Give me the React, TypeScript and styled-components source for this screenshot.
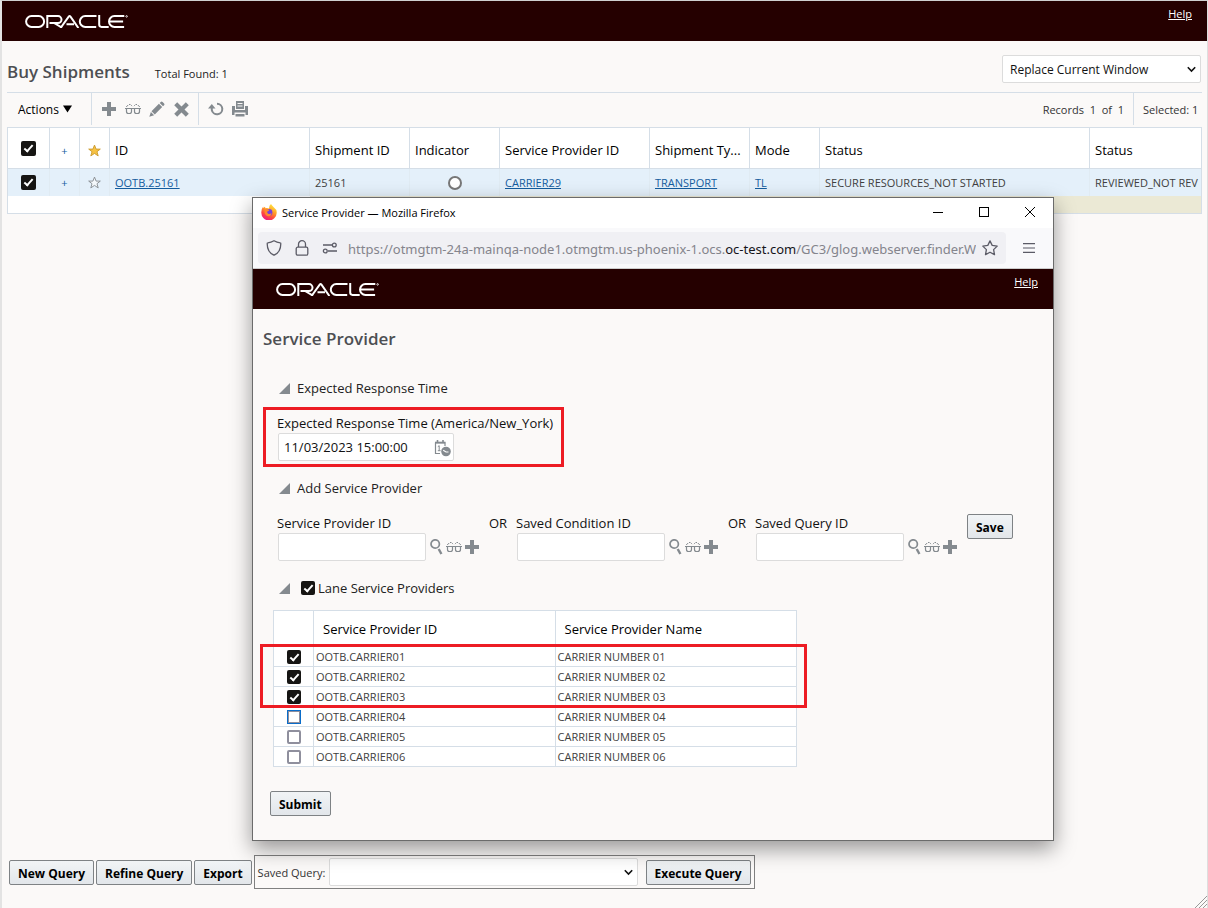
import React from "react";
import styled, { createGlobalStyle } from "styled-components";

const font = '"Open Sans", "Noto Sans", sans-serif';
const line = "#d5dee7";
const grey = "#848a8f";
const maroon = "#250000";
const paper = "#fbf9f8";
const link = "#145c9e";

const Global = createGlobalStyle`
  *, *::before, *::after { box-sizing: border-box; }
  body { margin: 0; background: ${paper}; font-family: ${font}; font-size: 12px; color: #111; }
  button, input, select { font-family: inherit; font-size: inherit; color: inherit; margin: 0; }
  svg { display: block; flex: none; }
`;

/* ---------- shared parts ---------- */

const Page = styled.div`
  position: relative;
  display: flex;
  flex-direction: column;
  min-height: 100vh;
  border-top: 1px solid #d0d0d0;
  border-left: 2px solid #e3e3e3;
  border-right: 1px solid #dedede;
  overflow: hidden;
`;

const Banner = styled.header`
  display: flex;
  align-items: flex-start;
  justify-content: space-between;
  height: 40px;
  padding: 4px 15px 0 23px;
  background: ${maroon};
  color: #fff;
`;

const LogoBox = styled.div`
  padding-top: 10px;
`;

const HelpLink = styled.a`
  font-size: 11px;
  line-height: 18px;
  color: #fff;
`;

const Heading = styled.h1`
  margin: 0;
  font-size: 17px;
  line-height: 20px;
  font-weight: 600;
  color: #4d4f53;
`;

const PushButton = styled.button`
  height: 25px;
  padding: 3px 8px 0;
  border: 1px solid #7e8285;
  border-radius: 2px;
  background: linear-gradient(#f1f4f6, #e2e6ea);
  font-size: 12px;
  font-weight: 700;
  line-height: 20px;
  color: #000;
  white-space: nowrap;
`;

const IconButton = styled.button`
  display: flex;
  align-items: center;
  justify-content: center;
  width: 16px;
  height: 16px;
  padding: 0;
  border: 0;
  background: none;
  color: ${grey};
`;

const Check = styled.input.attrs({ type: "checkbox" })<{ $size?: number; $focus?: boolean }>`
  appearance: none;
  position: relative;
  display: block;
  flex: none;
  width: ${(p) => p.$size ?? 14}px;
  height: ${(p) => p.$size ?? 14}px;
  border: 2px solid #8f8f9d;
  border-radius: 2px;
  background: #fff;
  ${(p) => p.$focus && "border: 1px solid #0a6cc9; box-shadow: inset 0 0 0 1px #8f8f9d; border-radius: 0;"}
  &:checked {
    border: 0;
    background: #161513;
  }
  &:checked::after {
    content: "";
    position: absolute;
    left: 5px;
    top: 2px;
    width: 5px;
    height: 9px;
    border: solid #fff;
    border-width: 0 2px 2px 0;
    transform: rotate(42deg);
  }
`;

const SelectBox = styled.div<{ $width: number }>`
  position: relative;
  width: ${(p) => p.$width}px;
  & > svg {
    position: absolute;
    right: 5px;
    top: 11px;
    pointer-events: none;
  }
`;

const Select = styled.select`
  appearance: none;
  display: block;
  width: 100%;
  height: 28px;
  padding: 0 20px 0 7px;
  border: 1px solid #dcdcdc;
  border-radius: 2px;
  background: #fff;
  font-size: 12px;
  color: #111;
`;

/* ---------- drawings ---------- */

const OracleLogo = () => (
  <svg width="103" height="13" viewBox="0 0 103 13" fill="none" stroke="#fff" strokeWidth="2" role="img" aria-label="Oracle">
    <rect x="1.1" y="1.1" width="18" height="10.8" rx="5.4" />
    <path d="M22.3 13V1.1H33a3.5 3.5 0 0 1 0 7h-8.5M29 8l8 4.6" />
    <path d="M35.5 13l8.2-11.4q.9-1 1.8 0L53.4 13M41.5 9.2H49" />
    <path d="M71.5 1.1H60.2a5.4 5.4 0 0 0 0 10.8h11" />
    <path d="M74.2 0v9.6q0 2.3 2.3 2.3h7.2" />
    <path d="M99.3 1.1H89.4a5.4 5.4 0 0 0 0 10.8h9.7M84.6 6.5h13.5" />
    <circle cx="101.6" cy="1.4" r=".8" strokeWidth=".8" />
  </svg>
);

const Chevron = () => (
  <svg width="9" height="7" viewBox="0 0 9 7" fill="none" stroke="#111" strokeWidth="1.6">
    <path d="M.8 1.2l3.7 3.8 3.7-3.8" />
  </svg>
);

const Plus = () => (
  <svg width="14" height="14" viewBox="0 0 14 14" fill="currentColor">
    <path d="M5 0h4v5h5v4H9v5H5V9H0V5h5z" />
  </svg>
);

const Glasses = () => (
  <svg width="16" height="12" viewBox="0 0 16 12" fill="none" stroke="currentColor">
    <path d="M0 5.500h16" strokeWidth="1" />
    <path d="M1.500 5.500v3q0 2 2 2h1q2 0 2-2v-3M9.500 5.500v3q0 2 2 2h1q2 0 2-2v-3" strokeWidth="1.200" />
    <path d="M1.200 4l2-2M4 1.500h1.500M6.200 2.200l.8.900M14.800 4l-2-2M12 1.500h-1.500M9.800 2.200l-.8.900" strokeWidth="1" />
  </svg>
);

const Pencil = () => (
  <svg width="16" height="16" viewBox="0 0 16 16" fill="currentColor">
    <path d="M11.800.9q.9-.9 1.800 0l1.500 1.500q.9.9 0 1.800L14 5.300 10.700 2zM9.900 2.800l3.300 3.300-7.400 7.400-3.300-3.300zM1.900 11l3.200 3.200L.3 15.700z" />
  </svg>
);

const Cross = () => (
  <svg width="15" height="15" viewBox="0 0 15 15" stroke="currentColor" strokeWidth="4.200">
    <path d="M1.700 1.700l11.600 11.600M13.300 1.700L1.700 13.300" />
  </svg>
);

const Refresh = () => (
  <svg width="16" height="16" viewBox="0 0 16 16" fill="none" stroke="currentColor" strokeWidth="2">
    <path d="M9 2.700a5.300 5.300 0 1 1-5.200 6.300V7" />
    <path d="M0 7.500L3.800 3l3.700 4.500z" fill="currentColor" stroke="none" />
  </svg>
);

const Printer = () => (
  <svg width="16" height="16" viewBox="0 0 16 16" fill="currentColor">
    <path d="M4 0h8v8H4zm1.500 2v1h5V2zm0 2.500v1h5v-1z" fillRule="evenodd" />
    <path d="M0 5h3v4h10V5h3v9h-2.500v-2.500h-11V14H0zM3.500 13h9v2.500h-9z" />
  </svg>
);

const Magnifier = () => (
  <svg width="13" height="16" viewBox="0 0 13 16" fill="none" stroke="currentColor">
    <circle cx="5.200" cy="5" r="4.200" strokeWidth="1.700" />
    <path d="M8.700 10l2.700 5" strokeWidth="2.400" />
  </svg>
);

const Star = ({ filled }: { filled?: boolean }) => (
  <svg width="13" height="13" viewBox="0 0 13 12" fill={filled ? "#f7c243" : "#f4f8fb"} stroke={filled ? "#c99a2e" : grey} strokeWidth=".9">
    <path d="M6.500.6l1.600 4h4.200L9 7.200l1.200 4.200-3.700-2.500-3.700 2.500L4 7.200.7 4.600h4.200z" />
  </svg>
);

const CalendarClock = () => (
  <svg width="17" height="17" viewBox="0 0 17 17" fill="none" stroke={grey}>
    <path d="M6 13.500H1.500V3h9.500v3" strokeWidth="1.200" />
    <path d="M1 2.500h10.500" strokeWidth="1.600" />
    <path d="M3.500 0v3M9 0v3" strokeWidth="1.600" />
    <path d="M3.800 6.700l1.400-1v5M3.800 10.700h2.800" strokeWidth="1" />
    <circle cx="12" cy="11.500" r="4.800" fill={grey} stroke="none" />
    <path d="M9.200 10.300l2.800 1.700h2.500" stroke="#fff" strokeWidth="1.100" />
  </svg>
);

const Disclosure = () => (
  <svg width="11" height="11" viewBox="0 0 11 11" fill={grey}>
    <path d="M11 0v11H0z" />
  </svg>
);

const DownTriangle = () => (
  <svg width="9" height="8" viewBox="0 0 9 8">
    <path d="M0 .5h9L4.500 7.500z" />
  </svg>
);

const FirefoxLogo = () => (
  <svg width="16" height="16" viewBox="0 0 16 16">
    <defs>
      <linearGradient id="flame" x1=".8" y1="0" x2=".3" y2="1">
        <stop offset="0" stopColor="#fff04a" />
        <stop offset=".4" stopColor="#ffa126" />
        <stop offset=".7" stopColor="#ff4b3e" />
        <stop offset="1" stopColor="#e9158a" />
      </linearGradient>
    </defs>
    <path d="M10 0q1 1.600 2.500 3 3.500 2.500 3.200 6A7.700 7.700 0 0 1 .3 8.500Q.2 5 2.200 2.500v1.400L4 2.800l.4 1.400q1.800-.6 3.600.2Q8 1.500 10 0z" fill="url(#flame)" />
    <circle cx="8" cy="8.500" r="3.400" fill="#7540dc" />
    <path d="M3.500 5.500q2.500-1 4.800.5-.5 1.300-2 1.500-.6 2 1.300 2.400 1.700.3 3-1-.6 3.600-3.700 3.300Q3 11.600 3.500 5.500z" fill="#ff8a2c" />
  </svg>
);

const Shield = () => (
  <svg width="16" height="16" viewBox="0 0 16 16" fill="none" stroke="#5b5b66" strokeWidth="1.300">
    <path d="M8 .8q3 1.800 6.200 2.100.6 0 .6.800 0 8.500-6.800 11.500Q1.200 12.200 1.200 3.700q0-.8.6-.8Q5 2.600 8 .8z" />
  </svg>
);

const Lock = () => (
  <svg width="14" height="16" viewBox="0 0 14 16" fill="none" stroke="#5b5b66" strokeWidth="1.300">
    <rect x="1.200" y="7.200" width="11.600" height="8" rx="1.500" />
    <path d="M3.500 7V4.200a3.500 3.500 0 0 1 7 0V7" />
  </svg>
);

const Permissions = () => (
  <svg width="16" height="12" viewBox="0 0 16 12" fill="none" stroke="#5b5b66" strokeWidth="1.300">
    <path d="M1 3h9M6 9h9" />
    <circle cx="12.300" cy="3" r="1.900" />
    <circle cx="3.300" cy="9" r="1.900" />
  </svg>
);

const BookmarkStar = () => (
  <svg width="16" height="16" viewBox="0 0 16 16" fill="none" stroke="#5b5b66" strokeWidth="1.300" strokeLinejoin="round">
    <path d="M8 .9l2.200 4.500 5 .7-3.600 3.500.9 5L8 12.200l-4.500 2.400.9-5L.8 6.100l5-.7z" />
  </svg>
);

const Menu = () => (
  <svg width="12" height="10" viewBox="0 0 12 10" stroke="#5b5b66" strokeWidth="1.200">
    <path d="M0 .6h12M0 5h12M0 9.400h12" />
  </svg>
);

/* ---------- main window ---------- */

const TitleRow = styled.div`
  display: flex;
  align-items: center;
  justify-content: space-between;
  height: 51px;
  padding: 5px 6px 0 5px;
`;

const TitleGroup = styled.div`
  display: flex;
  align-items: center;
  gap: 25px;
  padding-top: 5px;
`;

const Found = styled.span`
  padding-top: 4px;
  font-size: 11px;
  line-height: 16px;
  color: #222;
`;

const Toolbar = styled.div`
  display: flex;
  height: 33px;
  margin: 0 5px;
  border-top: 1px solid ${line};
`;

const ToolGroup = styled.div<{ $width?: number; $open?: boolean }>`
  display: flex;
  align-items: center;
  gap: 8px;
  width: ${(p) => (p.$width ? p.$width + "px" : "auto")};
  padding: 0 9px;
  border-right: ${(p) => (p.$open ? "0" : `1px solid ${line}`)};
`;

const ToolSpacer = styled.div`
  flex: 1;
`;

const ActionsButton = styled.button`
  display: flex;
  align-items: center;
  gap: 4px;
  padding: 0 2px;
  border: 0;
  background: none;
  font-size: 12px;
  color: #000;
`;

const SmallText = styled.span`
  padding-top: 2px;
  font-size: 11px;
  line-height: 16px;
  color: #333;
  white-space: pre;
`;

const GridFrame = styled.div`
  margin: 2px 5px 0;
  border: 1px solid ${line};
  background: #fff;
  overflow: hidden;
`;

const Grid = styled.table`
  width: 100%;
  border-collapse: separate;
  border-spacing: 0;
  table-layout: fixed;
  th, td {
    padding: 0 5px;
    text-align: left;
    white-space: nowrap;
    overflow: hidden;
  }
  th {
    height: 41px;
    padding-top: 4px;
    border-right: 1px solid ${line};
    border-bottom: 1px solid ${line};
    font-size: 13px;
    font-weight: 500;
    color: #000;
  }
  th:first-child { padding-top: 0; }
  th:last-child { border-right: 0; }
  td { height: 27px; border-right: 1px solid #e0ebf3; background: #e4f0fa; font-size: 11px; color: #404040; }
  td:last-child { border-right: 0; }
  a { color: ${link}; }
`;

const FillerRow = styled.tr`
  && td { height: 17px; border: 0; background: #ebe9d5; }
  && td:first-child { background: #fff; }
`;

const Center = styled.div`
  display: flex;
  justify-content: center;
  align-items: center;
`;

const Expand = styled.button`
  padding: 0;
  border: 0;
  background: none;
  font-size: 11px;
  color: ${link};
`;

const Circle = styled.span`
  width: 14px;
  height: 14px;
  border: 2px solid #777;
  border-radius: 50%;
  background: #fff;
`;

const Footer = styled.footer`
  display: flex;
  align-items: center;
  gap: 2px;
  margin-top: auto;
  padding: 0 7px 19px;
`;

const QueryBox = styled.div`
  display: flex;
  align-items: center;
  width: 501px;
  height: 34px;
  padding: 0 3px;
  border: 1px solid #808080;
  ${PushButton} { margin-left: auto; }
`;

const QueryLabel = styled.label`
  width: 71px;
  font-size: 11px;
  color: #333;
  white-space: nowrap;
`;

const Grip = styled.div`
  position: absolute;
  right: 0;
  bottom: 0;
`;

/* ---------- pop-up window ---------- */

const Popup = styled.section`
  position: absolute;
  top: 196px;
  left: 250px;
  right: 153px;
  border: 1px solid #6b6b6b;
  background: ${paper};
  box-shadow: 0 8px 20px rgba(0, 0, 0, 0.4);
`;

const WindowBar = styled.div`
  display: flex;
  align-items: center;
  height: 30px;
  padding: 0 17px 2px 8px;
  background: #fff;
  font-size: 11px;
  color: #000;
`;

const WindowTitle = styled.span`
  flex: 1;
  padding-left: 5px;
`;

const WindowControls = styled.div`
  display: flex;
  gap: 34px;
`;

const WindowButton = styled.button`
  width: 12px;
  height: 12px;
  padding: 0;
  border: 0;
  background: none;
`;

const AddressRow = styled.div`
  display: flex;
  align-items: center;
  height: 41px;
  padding: 0 18px 0 5px;
  border-bottom: 1px solid #ccc;
  background: #f9f9fb;
`;

const AddressField = styled.div`
  display: flex;
  align-items: center;
  flex: 1;
  min-width: 0;
  height: 32px;
  margin-right: 17px;
  padding: 0 8px;
  border-radius: 4px;
  background: #f0f0f4;
`;

const AddressIcons = styled.div`
  display: flex;
  align-items: center;
  gap: 13px;
  width: 82px;
`;

const Url = styled.span`
  flex: 1;
  min-width: 0;
  margin-right: 6px;
  padding-top: 1px;
  overflow: hidden;
  font-family: "Noto Sans", sans-serif;
  font-size: 13px;
  white-space: nowrap;
  color: #84848c;
  b { font-weight: 400; color: #15141a; }
`;

const PopupBody = styled.div`
  padding: 20px 10px 24px;
`;

const SectionHead = styled.div<{ $top: number }>`
  display: flex;
  align-items: center;
  gap: 7px;
  margin: ${(p) => p.$top}px 0 0 16px;
  font-size: 13px;
  font-weight: 500;
  line-height: 20px;
  color: #222;
`;

const SectionCheck = styled.label`
  display: flex;
  align-items: center;
  gap: 3px;
  padding-left: 4px;
`;

const Highlight = styled.div`
  width: 301px;
  margin-top: 9px;
  padding: 3px 0 3px 11px;
  border: 3px solid #ed1c24;
`;

const Label = styled.label`
  display: block;
  font-size: 13px;
  font-weight: 500;
  line-height: 20px;
  color: #111;
  white-space: nowrap;
`;

const TextBox = styled.input`
  display: block;
  width: 148px;
  height: 28px;
  padding: 0 5px;
  border: 1px solid #dcdcdc;
  border-radius: 2px;
  background: #fff;
  font-size: 12px;
`;

const DateBox = styled.div`
  position: relative;
  width: 176px;
  margin-left: 1px;
  ${TextBox} { width: 100%; font-size: 13px; }
  svg { position: absolute; right: 3px; top: 7px; }
`;

const Finder = styled.div`
  display: flex;
  margin: 15px 0 0 14px;
`;

const FinderField = styled.div`
  width: 212px;
`;

const FinderControls = styled.div`
  display: flex;
  align-items: center;
  gap: 2px;
  padding-left: 1px;
`;

const Or = styled.span`
  width: 27px;
  font-size: 13px;
  font-weight: 500;
  line-height: 20px;
`;

const SaveSlot = styled.div`
  padding-top: 1px;
`;

const SubmitSlot = styled.div`
  padding-left: 7px;
`;

const ProviderFrame = styled.div`
  position: relative;
  width: 524px;
  margin: 12px 0 24px 10px;
`;

const ProviderTable = styled.table`
  width: 100%;
  border-collapse: collapse;
  table-layout: fixed;
  background: #fff;
  th, td { border: 1px solid ${line}; padding: 0 2px; text-align: left; height: 20px; line-height: 16px; }
  th { height: 36px; padding: 0 9px; font-size: 13px; font-weight: 500; color: #000; }
  td { font-size: 11px; color: #404040; }
`;

const RowsHighlight = styled.div`
  position: absolute;
  left: -13px;
  right: -10px;
  top: 34px;
  height: 64px;
  border: 3px solid #ed1c24;
  pointer-events: none;
`;

const finders = ["Service Provider ID", "Saved Condition ID", "Saved Query ID"];
const providers = ["01", "02", "03", "04", "05", "06"];

function ServiceProviderWindow() {
  return (
    <Popup aria-label="Service Provider">
      <WindowBar>
        <FirefoxLogo />
        <WindowTitle>Service Provider — Mozilla Firefox</WindowTitle>
        <WindowControls>
          <WindowButton aria-label="Minimize">
            <svg width="12" height="12" stroke="#000"><path d="M1 6.500h10" /></svg>
          </WindowButton>
          <WindowButton aria-label="Maximize">
            <svg width="12" height="12" stroke="#000" fill="none"><rect x="1.500" y="1.500" width="9" height="9" /></svg>
          </WindowButton>
          <WindowButton aria-label="Close">
            <svg width="12" height="12" stroke="#000"><path d="M1 1l10 10M11 1L1 11" /></svg>
          </WindowButton>
        </WindowControls>
      </WindowBar>
      <AddressRow>
        <AddressField>
          <AddressIcons>
            <Shield />
            <Lock />
            <Permissions />
          </AddressIcons>
          <Url>
            https://otmgtm-24a-mainqa-node1.otmgtm.us-phoenix-1.ocs.<b>oc-test.com</b>/GC3/glog.webserver.finder.W
          </Url>
          <BookmarkStar />
        </AddressField>
        <Menu />
      </AddressRow>
      <Banner>
        <LogoBox><OracleLogo /></LogoBox>
        <HelpLink href="#help">Help</HelpLink>
      </Banner>
      <PopupBody>
        <Heading as="h2">Service Provider</Heading>

        <SectionHead $top={29}>
          <Disclosure />
          Expected Response Time
        </SectionHead>
        <Highlight>
          <Label htmlFor="response">Expected Response Time (America/New_York)</Label>
          <DateBox>
            <TextBox id="response" defaultValue="11/03/2023 15:00:00" />
            <CalendarClock />
          </DateBox>
        </Highlight>

        <SectionHead $top={11}>
          <Disclosure />
          Add Service Provider
        </SectionHead>
        <Finder>
          {finders.map((name, i) => (
            <React.Fragment key={name}>
              {i > 0 && <Or>OR</Or>}
              <FinderField>
                <Label htmlFor={`finder-${i}`}>{name}</Label>
                <FinderControls>
                  <TextBox id={`finder-${i}`} />
                  <IconButton aria-label="Find"><Magnifier /></IconButton>
                  <IconButton aria-label="View"><Glasses /></IconButton>
                  <IconButton aria-label="New"><Plus /></IconButton>
                </FinderControls>
              </FinderField>
            </React.Fragment>
          ))}
          <SaveSlot><PushButton>Save</PushButton></SaveSlot>
        </Finder>

        <SectionHead $top={17}>
          <Disclosure />
          <SectionCheck>
            <Check defaultChecked />
            Lane Service Providers
          </SectionCheck>
        </SectionHead>
        <ProviderFrame>
          <ProviderTable>
            <colgroup>
              <col style={{ width: 40 }} />
              <col />
              <col />
            </colgroup>
            <thead>
              <tr>
                <th aria-label="Select" />
                <th>Service Provider ID</th>
                <th>Service Provider Name</th>
              </tr>
            </thead>
            <tbody>
              {providers.map((n, i) => (
                <tr key={n}>
                  <td>
                    <Center>
                      <Check defaultChecked={i < 3} $focus={i === 3} aria-label={`Carrier ${n}`} />
                    </Center>
                  </td>
                  <td>OOTB.CARRIER{n}</td>
                  <td>CARRIER NUMBER {n}</td>
                </tr>
              ))}
            </tbody>
          </ProviderTable>
          <RowsHighlight />
        </ProviderFrame>
        <SubmitSlot><PushButton>Submit</PushButton></SubmitSlot>
      </PopupBody>
    </Popup>
  );
}

const gridColumns = [42, 30, 30, 200, 100, 90, 150, 100, 70, 270];

export default function App() {
  return (
    <>
      <Global />
      <Page>
        <Banner>
          <LogoBox><OracleLogo /></LogoBox>
          <HelpLink href="#help">Help</HelpLink>
        </Banner>

        <TitleRow>
          <TitleGroup>
            <Heading>Buy Shipments</Heading>
            <Found>Total Found: 1</Found>
          </TitleGroup>
          <SelectBox $width={199}>
            <Select aria-label="Window mode">
              <option>Replace Current Window</option>
            </Select>
            <Chevron />
          </SelectBox>
        </TitleRow>

        <Toolbar>
          <ToolGroup $width={85}>
            <ActionsButton>Actions <DownTriangle /></ActionsButton>
          </ToolGroup>
          <ToolGroup $width={107}>
            <IconButton aria-label="New"><Plus /></IconButton>
            <IconButton aria-label="View"><Glasses /></IconButton>
            <IconButton aria-label="Edit"><Pencil /></IconButton>
            <IconButton aria-label="Delete"><Cross /></IconButton>
          </ToolGroup>
          <ToolGroup $open>
            <IconButton aria-label="Refresh"><Refresh /></IconButton>
            <IconButton aria-label="Print"><Printer /></IconButton>
          </ToolGroup>
          <ToolSpacer />
          <ToolGroup>
            <SmallText>Records  1  of  1</SmallText>
          </ToolGroup>
          <ToolGroup $width={68} $open>
            <SmallText>Selected: 1</SmallText>
          </ToolGroup>
        </Toolbar>

        <GridFrame>
          <Grid>
            <colgroup>
              {gridColumns.map((w, i) => <col key={i} style={{ width: w }} />)}
              <col />
            </colgroup>
            <thead>
              <tr>
                <th><Center><Check $size={15} defaultChecked aria-label="Select all" /></Center></th>
                <th><Center><Expand aria-label="Expand all">+</Expand></Center></th>
                <th><Center><Star filled /></Center></th>
                <th>ID</th>
                <th>Shipment ID</th>
                <th>Indicator</th>
                <th>Service Provider ID</th>
                <th>Shipment Ty...</th>
                <th>Mode</th>
                <th>Status</th>
                <th>Status</th>
              </tr>
            </thead>
            <tbody>
              <tr>
                <td><Center><Check $size={15} defaultChecked aria-label="Select OOTB.25161" /></Center></td>
                <td><Center><Expand aria-label="Expand">+</Expand></Center></td>
                <td><Center><Star /></Center></td>
                <td><a href="#shipment">OOTB.25161</a></td>
                <td>25161</td>
                <td><Center><Circle /></Center></td>
                <td><a href="#carrier">CARRIER29</a></td>
                <td><a href="#type">TRANSPORT</a></td>
                <td><a href="#mode">TL</a></td>
                <td>SECURE RESOURCES_NOT STARTED</td>
                <td>REVIEWED_NOT REV</td>
              </tr>
              <FillerRow>
                <td colSpan={4} />
                <td colSpan={7} />
              </FillerRow>
            </tbody>
          </Grid>
        </GridFrame>

        <Footer>
          <PushButton>New Query</PushButton>
          <PushButton>Refine Query</PushButton>
          <PushButton>Export</PushButton>
          <QueryBox>
            <QueryLabel htmlFor="saved">Saved Query:</QueryLabel>
            <SelectBox $width={309}>
              <Select id="saved"><option></option></Select>
              <Chevron />
            </SelectBox>
            <PushButton>Execute Query</PushButton>
          </QueryBox>
        </Footer>

        <ServiceProviderWindow />

        <Grip>
          <svg width="13" height="13" viewBox="0 0 13 13" stroke="#999">
            <path d="M1 13L13 1M5 13l8-8M9 13l4-4" />
          </svg>
        </Grip>
      </Page>
    </>
  );
}
